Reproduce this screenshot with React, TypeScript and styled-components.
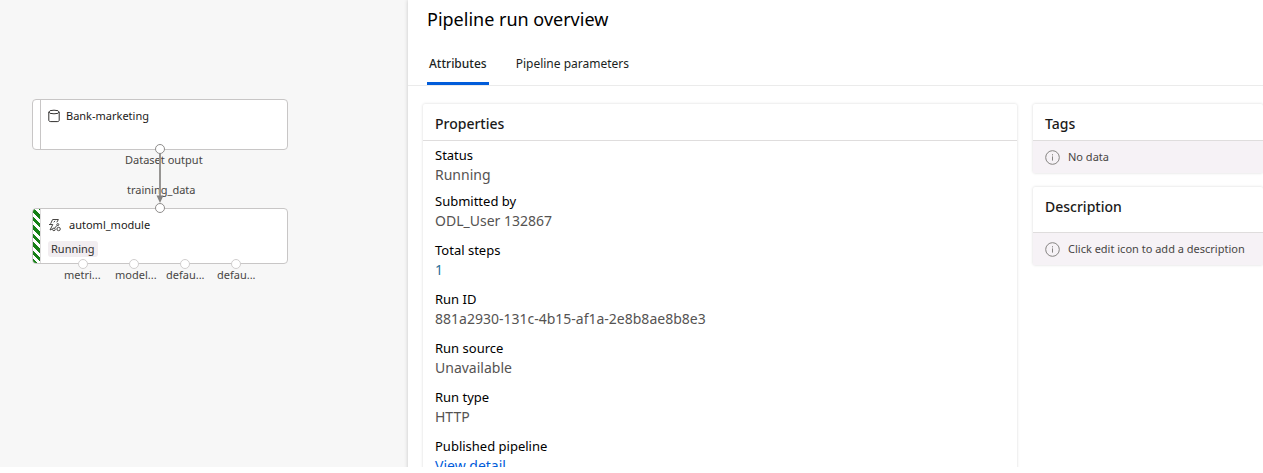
import React from 'react';
import styled, { createGlobalStyle, css } from 'styled-components';

const GlobalStyle = createGlobalStyle`
  * { box-sizing: border-box; }
  body { margin: 0; background: #fff; }
  body, button { font-family: "Noto Sans", "Open Sans", sans-serif; }
  h1, h2, dl, dd, p { margin: 0; }
`;

const Page = styled.main`
  height: 100vh;
  padding-bottom: 6px;
`;

const Workspace = styled.div`
  display: grid;
  grid-template-columns: 408px minmax(0, 1fr);
  height: 100%;
  overflow: hidden;
`;

const Canvas = styled.section`
  position: relative;
  background: #f7f7f7;
  overflow: hidden;
`;

const Node = styled.article<{ $top: number; $height: number }>`
  position: absolute;
  left: 32px;
  top: ${(p) => p.$top}px;
  width: 256px;
  height: ${(p) => p.$height}px;
  display: flex;
  background: #fff;
  border: 1px solid #c8c6c6;
  border-radius: 4px;
  overflow: hidden;
`;

const Stripe = styled.div<{ $running?: boolean }>`
  width: 8px;
  border-right: 1px solid #c8c6c6;
  ${(p) =>
    p.$running &&
    css`
      background: repeating-linear-gradient(45deg, #168016 0 3px, #fff 3px 6px);
      border-right-color: #dddcdc;
    `}
`;

const NodeBody = styled.div`
  display: flex;
  flex-direction: column;
  align-items: flex-start;
  gap: 8px;
  padding: 8px 7px;
`;

const NodeTitle = styled.div<{ $gap: number }>`
  display: flex;
  align-items: center;
  gap: ${(p) => p.$gap}px;
  height: 16px;
  font-size: 11px;
  font-weight: 400;
  line-height: 16px;
  color: #1b1a19;
`;

const Badge = styled.span`
  padding: 0 3px;
  border-radius: 3px;
  background: #f1edf0;
  font-size: 11px;
  line-height: 16px;
  color: #323130;
`;

const Edge = styled.svg`
  position: absolute;
  left: 155px;
  top: 150px;
`;

const Port = styled.span<{ $x: number; $y: number; $light?: boolean }>`
  position: absolute;
  left: ${(p) => p.$x - 5}px;
  top: ${(p) => p.$y - 5}px;
  width: 10px;
  height: 10px;
  border: ${(p) => (p.$light ? '1px solid #d0cece' : '1px solid #8f8d8c')};
  border-radius: 50%;
  background: #fff;
`;

const PortLabel = styled.span<{ $x: number; $y: number }>`
  position: absolute;
  left: ${(p) => p.$x}px;
  top: ${(p) => p.$y}px;
  font-size: 11px;
  line-height: 14px;
  color: #484644;
  white-space: nowrap;
`;

const Panel = styled.section`
  position: relative;
  min-width: 0;
  background: #fff;
  box-shadow: 0 0 4px rgba(0, 0, 0, 0.2);
`;

const PanelTitle = styled.h1`
  padding: 7px 19px 0;
  font-size: 18px;
  font-weight: 400;
  line-height: 24px;
  color: #000;
`;

const Tabs = styled.div`
  display: flex;
  gap: 25px;
  padding: 13px 19px 0;
  border-bottom: 1px solid #ebebeb;
`;

const Tab = styled.button<{ $active?: boolean }>`
  height: 41px;
  padding: 2px 2px 0;
  border: 0;
  border-bottom: 3px solid ${(p) => (p.$active ? '#015cda' : 'transparent')};
  background: none;
  font-size: 12px;
  font-weight: ${(p) => (p.$active ? 500 : 400)};
  line-height: 16px;
  color: #201f1e;
`;

const Cards = styled.div`
  display: grid;
  grid-template-columns: minmax(0, 594fr) minmax(0, 230fr);
  gap: 16px;
  padding: 18px 0 0 15px;
`;

const Column = styled.div`
  display: flex;
  flex-direction: column;
  gap: 14px;
`;

const Card = styled.section`
  background: #fff;
  border-radius: 2px;
  box-shadow: 0 0 3px rgba(0, 0, 0, 0.16);
`;

const CardTitle = styled.h2<{ $tall?: boolean }>`
  height: ${(p) => (p.$tall ? 46 : 37)}px;
  padding: 8px 12px 0;
  border-bottom: 1px solid #dfdddd;
  font-size: 14px;
  font-weight: 500;
  line-height: 24px;
  color: #1b1a19;
`;

const Fields = styled.dl`
  padding: 4px 12px;
`;

const Field = styled.div<{ $tight?: boolean }>`
  padding-bottom: ${(p) => (p.$tight ? 6 : 9)}px;
`;

const Term = styled.dt`
  font-size: 13px;
  font-weight: 400;
  line-height: 20px;
  color: #000;
`;

const Value = styled.dd<{ $accent?: boolean }>`
  font-size: 14px;
  line-height: 20px;
  color: ${(p) => (p.$accent ? '#2c7097' : '#555352')};
`;

const DetailLink = styled.a`
  color: #015cda;
  text-decoration: none;
`;

const Notice = styled.p`
  display: flex;
  align-items: center;
  gap: 8px;
  height: 32px;
  padding: 0 12px;
  background: #f6f2f6;
  font-size: 11px;
  line-height: 16px;
  color: #484644;
  white-space: nowrap;
`;

const DatasetIcon = () => (
  <svg width="12" height="14" viewBox="0 0 12 14" fill="none" stroke="#323130" aria-hidden="true">
    <ellipse cx="6" cy="3" rx="5.2" ry="1.8" />
    <path d="M.8 3v8.3c0 .9.8 1.3 2 1.3h6.4c1.2 0 2-.4 2-1.3V3" />
  </svg>
);

const AutomlIcon = () => (
  <svg width="13" height="14" viewBox="0 0 13 14" fill="none" stroke="#484644" aria-hidden="true">
    <path d="M4.600 1.500h5.800L8.800 4.300M4.600 1.500L2.600 5.800M1 6.500h3.800L2 12l2.600-1.200" />
    <path d="M5.800 4.300L7 2.800" />
    <circle cx="9.800" cy="6.600" r="1" />
    <circle cx="5.900" cy="11.400" r="1.300" />
    <circle cx="10.600" cy="11" r="1.700" />
    <path d="M6.600 10.200L9 7.400" />
  </svg>
);

const InfoIcon = () => (
  <svg width="15" height="15" viewBox="0 0 15 15" fill="none" stroke="#858381" aria-hidden="true">
    <circle cx="7.5" cy="7.5" r="6.8" />
    <path d="M7.5 6.4v4.2M7.5 4.2v1.2" />
  </svg>
);

const outputs = [
  { x: 83, label: 'metri...', left: 64 },
  { x: 134, label: 'model...', left: 115 },
  { x: 185, label: 'defau...', left: 166 },
  { x: 236, label: 'defau...', left: 217 },
];

const fields = [
  { term: 'Status', value: 'Running', tight: true },
  { term: 'Submitted by', value: 'ODL_User 132867' },
  { term: 'Total steps', value: '1', accent: true },
  { term: 'Run ID', value: '881a2930-131c-4b15-af1a-2e8b8ae8b8e3' },
  { term: 'Run source', value: 'Unavailable' },
  { term: 'Run type', value: 'HTTP' },
];

export default function App() {
  return (
    <Page>
      <GlobalStyle />
      <Workspace>
        <Canvas aria-label="Pipeline graph">
          <Node $top={99} $height={51}>
            <Stripe />
            <NodeBody>
              <NodeTitle $gap={6}>
                <DatasetIcon />
                Bank-marketing
              </NodeTitle>
            </NodeBody>
          </Node>
          <Node $top={208} $height={56}>
            <Stripe $running />
            <NodeBody>
              <NodeTitle $gap={8}>
                <AutomlIcon />
                automl_module
              </NodeTitle>
              <Badge>Running</Badge>
            </NodeBody>
          </Node>
          <PortLabel $x={125} $y={153}>Dataset output</PortLabel>
          <PortLabel $x={127} $y={183}>training_data</PortLabel>
          <Edge width="10" height="54" viewBox="0 0 10 54" aria-hidden="true">
            <path d="M5 0v48" stroke="#979593" strokeWidth="2" />
            <path d="M1.5 45.5h7L5 53z" fill="#858381" />
          </Edge>
          <Port $x={160} $y={149} />
          <Port $x={160} $y={208} />
          {outputs.map((o) => (
            <React.Fragment key={o.x}>
              <Port $x={o.x} $y={264} $light />
              <PortLabel $x={o.left} $y={268}>{o.label}</PortLabel>
            </React.Fragment>
          ))}
        </Canvas>
        <Panel>
          <PanelTitle>Pipeline run overview</PanelTitle>
          <Tabs role="tablist">
            <Tab type="button" role="tab" aria-selected="true" $active>Attributes</Tab>
            <Tab type="button" role="tab" aria-selected="false">Pipeline parameters</Tab>
          </Tabs>
          <Cards>
            <Card>
              <CardTitle>Properties</CardTitle>
              <Fields>
                {fields.map((f) => (
                  <Field key={f.term} $tight={f.tight}>
                    <Term>{f.term}</Term>
                    <Value $accent={f.accent}>{f.value}</Value>
                  </Field>
                ))}
                <Field>
                  <Term>Published pipeline</Term>
                  <Value><DetailLink href="#detail">View detail</DetailLink></Value>
                </Field>
              </Fields>
            </Card>
            <Column>
              <Card>
                <CardTitle>Tags</CardTitle>
                <Notice><InfoIcon />No data</Notice>
              </Card>
              <Card>
                <CardTitle $tall>Description</CardTitle>
                <Notice><InfoIcon />Click edit icon to add a description</Notice>
              </Card>
            </Column>
          </Cards>
        </Panel>
      </Workspace>
    </Page>
  );
}
